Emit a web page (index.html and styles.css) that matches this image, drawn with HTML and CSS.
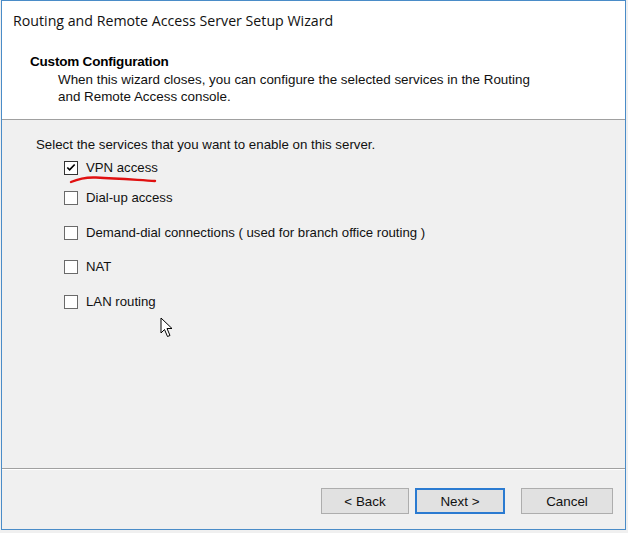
FILE: index.html
```html
<!DOCTYPE html>
<html>
<head>
<meta charset="utf-8">
<link rel="stylesheet" href="styles.css">
</head>
<body>
<div class="window">
  <div class="titlebar">Routing and Remote Access Server Setup Wizard</div>
  <div class="header">
    <div class="h-title">Custom Configuration</div>
    <div class="h-desc">When this wizard closes, you can configure the selected services in the Routing<br>and Remote Access console.</div>
  </div>
  <div class="content">
    <div class="prompt">Select the services that you want to enable on this server.</div>
    <div class="options">
      <div class="opt opt-vpn"><span class="cb checked"><svg viewBox="0 0 13 13" width="13" height="13"><path d="M2.5 6.5 L5 9 L10.5 3.2" fill="none" stroke="#000" stroke-width="1.8"/></svg></span><span class="lbl">VPN access</span>
        <svg class="scribble" width="100" height="12" viewBox="0 0 100 12"><path d="M3 8 C 10 5, 18 3, 28 3.5 C 50 4.5, 70 6, 87 7" fill="none" stroke="#e01010" stroke-width="2.4" stroke-linecap="round"/></svg>
      </div>
      <div class="opt opt-dial"><span class="cb"></span><span class="lbl">Dial-up access</span></div>
      <div class="opt opt-dd"><span class="cb"></span><span class="lbl">Demand-dial connections ( used for branch office routing )</span></div>
      <div class="opt opt-nat"><span class="cb"></span><span class="lbl">NAT</span></div>
      <div class="opt opt-lan"><span class="cb"></span><span class="lbl">LAN routing</span></div>
    </div>
    <svg class="cursor" width="16" height="22" viewBox="0 0 16 22"><path d="M1 1 L1 16 L4.5 12.5 L7.5 19.5 L10 18.5 L7 11.5 L12 11.5 Z" fill="#fff" stroke="#000" stroke-width="1"/></svg>
  </div>
  <div class="footer">
    <button class="btn">&lt; Back</button>
    <button class="btn btn-default">Next &gt;</button>
    <button class="btn btn-cancel">Cancel</button>
  </div>
</div>
</body>
</html>
```
FILE: styles.css
```css
html, body {
  margin: 0;
  padding: 0;
}
body {
  background: #f0f0f0;
  width: 628px;
  height: 533px;
  overflow: hidden;
  font-family: "Liberation Sans", Arial, sans-serif;
  color: #000;
}
.window {
  box-sizing: border-box;
  margin-left: 1px;
  width: 625px;
  height: 530px;
  border: 1px solid #4a8cc8;
  background: #f0f0f0;
  display: flex;
  flex-direction: column;
}
.titlebar {
  height: 38px;
  background: #fff;
  display: flex;
  align-items: center;
  padding-left: 11px;
  font-family: "Open Sans", "Noto Sans", sans-serif;
  font-size: 14.2px;
  color: #111;
}
.header {
  height: 81px;
  background: #fff;
  border-bottom: 1px solid #a0a0a0;
  padding-left: 28px;
  box-sizing: border-box;
}
.h-title {
  font-weight: bold;
  font-size: 13.5px;
  margin-top: 14px;
  line-height: 17px;
  letter-spacing: -0.2px;
}
.h-desc {
  margin-left: 28px;
  font-size: 13.4px;
  line-height: 17px;
  margin-top: 1px;
  color: #111;
}
.content {
  position: relative;
  height: 349px;
  border-bottom: 1px solid #a0a0a0;
  box-sizing: border-box;
  padding-left: 34px;
  padding-top: 16px;
}
.prompt {
  font-size: 13.3px;
  line-height: 17px;
  color: #111;
}
.options {
  margin-left: 28px;
  display: flex;
  flex-direction: column;
}
.opt {
  position: relative;
  display: flex;
  align-items: center;
  height: 17px;
  font-size: 13.2px;
  color: #111;
}
.opt-vpn { margin-top: 6px; }
.opt-dial { margin-top: 13px; }
.opt-dd { margin-top: 18px; }
.opt-nat { margin-top: 17px; }
.opt-lan { margin-top: 18px; }
.cb {
  box-sizing: border-box;
  width: 14px;
  height: 14px;
  border: 1px solid #6a6a6a;
  background: #fff;
  margin-right: 8px;
  display: flex;
  align-items: center;
  justify-content: center;
}
.cb.checked { border-color: #333; }
.cb svg { display: block; }
.scribble {
  position: absolute;
  left: 4px;
  top: 15px;
}
.cursor {
  position: absolute;
  left: 158px;
  top: 197px;
}
.footer {
  flex: 1;
  display: flex;
  align-items: flex-start;
  justify-content: flex-end;
  padding-top: 18px;
  padding-right: 12px;
  border-top: 1px solid #fff;
}
.btn {
  box-sizing: border-box;
  width: 88px;
  height: 26px;
  background: #e1e1e1;
  border: 1px solid #adadad;
  font-family: "Liberation Sans", Arial, sans-serif;
  font-size: 13.4px;
  color: #111;
  padding: 0;
  margin-left: 6px;
}
.btn-default {
  border: 2px solid #2b7bd1;
  width: 90px;
}
.btn-cancel {
  width: 92px;
  margin-left: 16px;
}
```
